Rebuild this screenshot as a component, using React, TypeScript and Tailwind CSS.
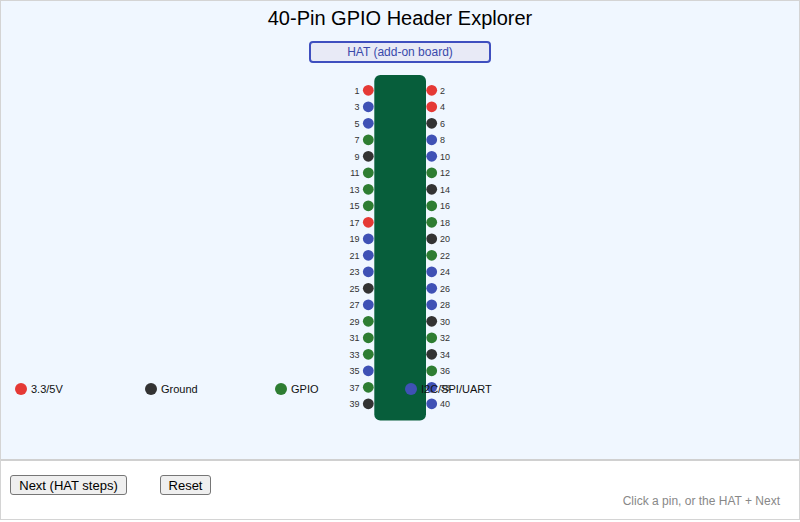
import React from "react";

const C = { p: "#e53935", g: "#333333", io: "#2e7d32", b: "#3f51b5" };

const left = ["p", "b", "b", "io", "g", "io", "io", "io", "p", "b", "b", "b", "g", "b", "io", "io", "io", "b", "io", "g"] as const;
const right = ["p", "p", "g", "b", "b", "io", "g", "io", "io", "g", "io", "b", "b", "b", "g", "io", "g", "io", "b", "b"] as const;

function Header() {
  const rows = Array.from({ length: 20 }, (_, i) => i);
  return (
    <svg width="160" height="370" viewBox="0 0 160 370" className="block">
      <rect x="54.3" y="12" width="51.7" height="345.5" rx="6" fill="#075e3b" />
      {rows.map((i) => {
        const y = 27.3 + i * 16.5;
        return (
          <g key={i}>
            <circle cx="48.3" cy={y} r="5.4" fill={C[left[i]]} />
            <circle cx="111.7" cy={y} r="5.4" fill={C[right[i]]} />
            <text x="39.5" y={y + 3.2} fontSize="9" textAnchor="end" fill="#333" fontFamily="Liberation Sans, Arial, sans-serif">
              {2 * i + 1}
            </text>
            <text x="120" y={y + 3.2} fontSize="9" fill="#333" fontFamily="Liberation Sans, Arial, sans-serif">
              {2 * i + 2}
            </text>
          </g>
        );
      })}
    </svg>
  );
}

const legend = [
  { c: "bg-[#e53935]", t: "3.3/5V" },
  { c: "bg-[#333333]", t: "Ground" },
  { c: "bg-[#2e7d32]", t: "GPIO" },
  { c: "bg-[#3f51b5]", t: "I2C/SPI/UART" },
];

export default function App() {
  return (
    <div className="w-[800px] h-[520px] border border-[#d4d4d4] flex flex-col font-['Liberation_Sans',Arial,sans-serif] text-[#111]">
      <div className="h-[460px] shrink-0 bg-[#f0f7ff] border-b-2 border-[#d0d0d0] relative flex flex-col items-center">
        <h1 className="text-[20px] leading-[24px] mt-[5px] text-black">40-Pin GPIO Header Explorer</h1>
        <button className="mt-[11px] w-[182px] h-[22px] rounded-[4px] border-2 border-[#3f4fbf] bg-[#e8eaf6] text-[12px] leading-[16px] text-[#3949ab]">
          HAT (add-on board)
        </button>
        <Header />
        <div className="absolute left-0 top-[381px] flex">
          {legend.map((l) => (
            <div key={l.t} className="w-[130px] flex items-center pl-[14px] gap-[4px] h-[14px]">
              <span className={`w-[12px] h-[12px] rounded-full ${l.c}`} />
              <span className="text-[11px] leading-[14px] text-[#111]">{l.t}</span>
            </div>
          ))}
        </div>
      </div>
      <div className="flex-1 bg-white flex pl-[9px] pr-[19px]">
        <div className="flex items-start gap-[33px] pt-[14px]">
          <button className="w-[117px] h-[20px] text-[13px] leading-[15px] bg-[#efefef] border border-[#767676] rounded-[3px] text-black">
            Next (HAT steps)
          </button>
          <button className="w-[51px] h-[20px] text-[13px] leading-[15px] bg-[#efefef] border border-[#767676] rounded-[3px] text-black">
            Reset
          </button>
        </div>
        <div className="ml-auto self-end mb-[11px] text-[12px] leading-[14px] text-[#888]">
          Click a pin, or the HAT + Next
        </div>
      </div>
    </div>
  );
}
